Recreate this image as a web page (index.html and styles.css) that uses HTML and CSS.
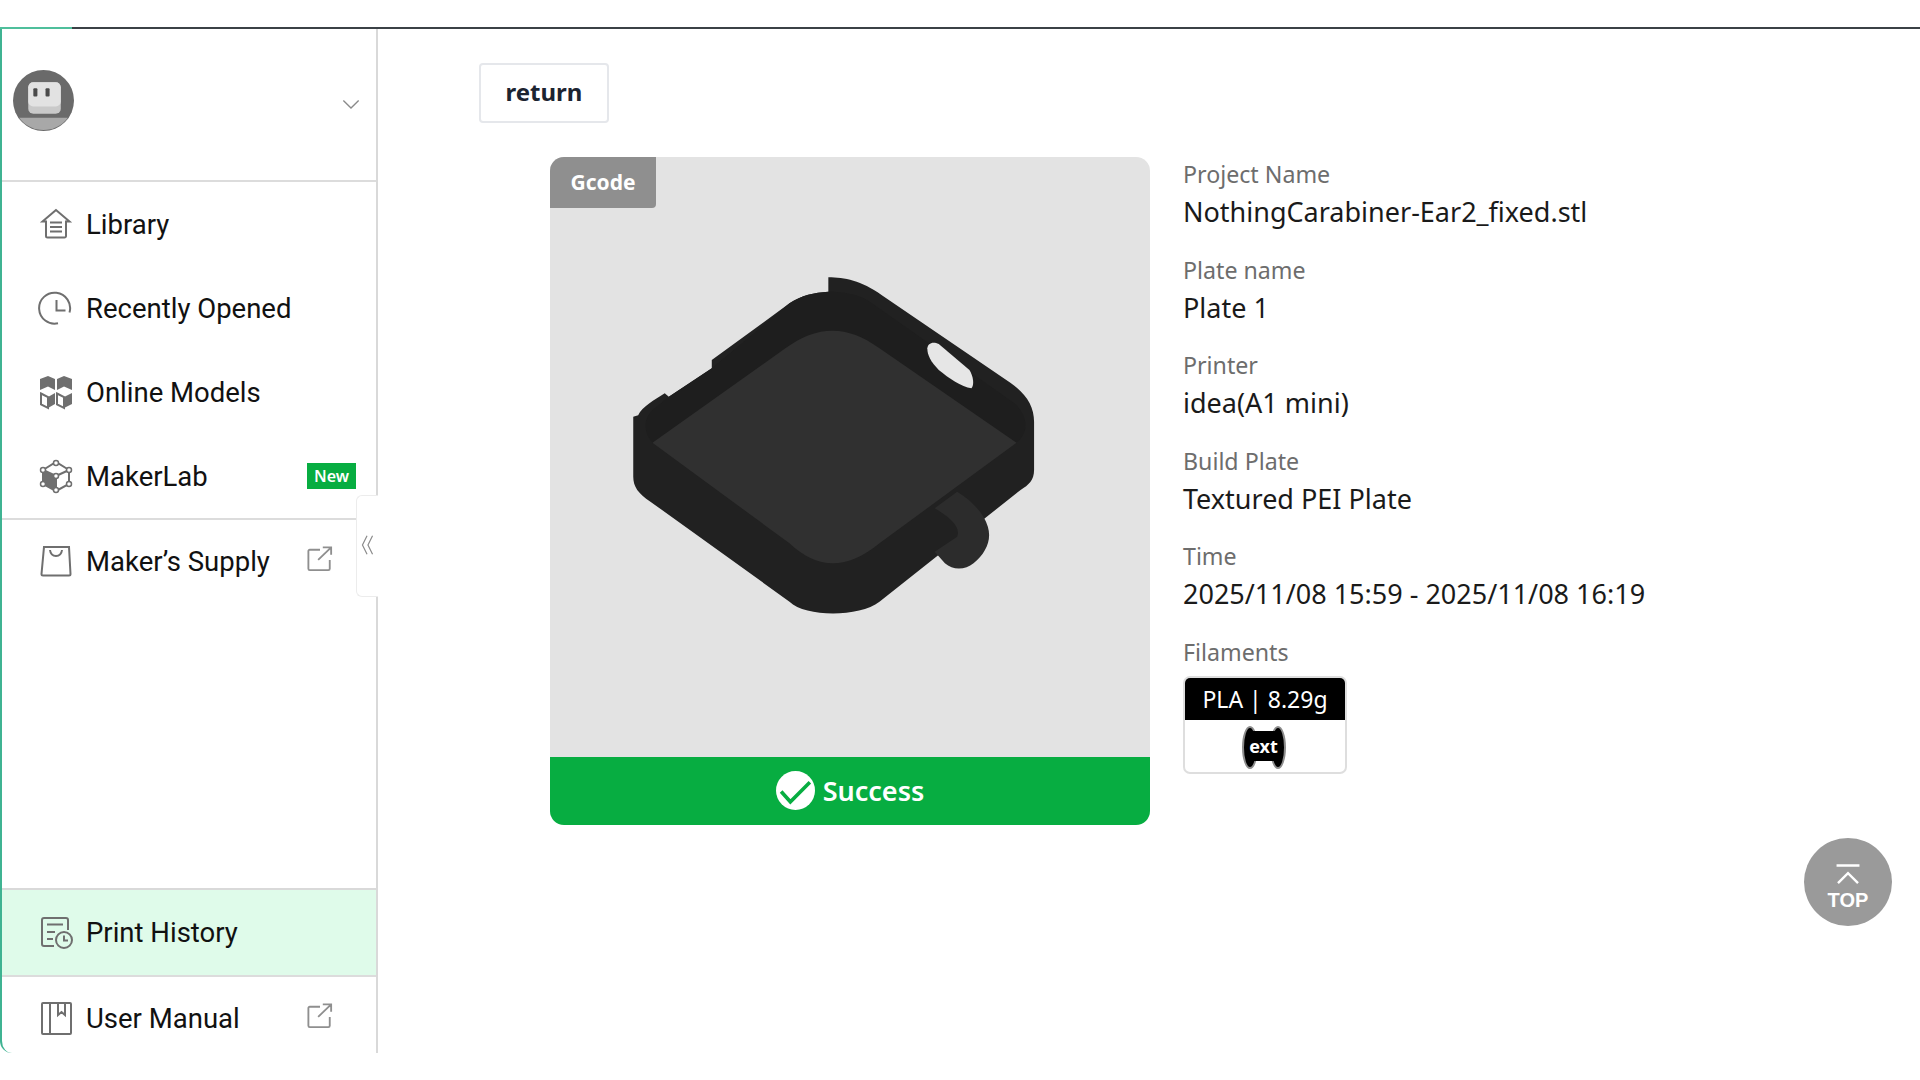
FILE: index.html
```html
<!DOCTYPE html>
<html lang="en">
<head>
    <meta charset="UTF-8">
    <title>Print History</title>
    <link rel="stylesheet" href="styles.css">
</head>
<body>
    <div class="top-strip"></div>
    <div class="app">
        <aside class="sidebar">
            <div class="user-box">
                <svg class="avatar" viewBox="0 0 60 60">
                    <circle cx="30" cy="30" r="30" fill="#6a6a6a"/>
                    <path d="M6 47h48a30 30 0 0 1-48 0z" fill="#a8a8a8"/>
                    <rect x="15" y="12" width="32" height="31" rx="5" fill="#c9c9c9"/>
                    <rect x="15" y="12" width="32" height="24" rx="5" fill="#e2e2e2"/>
                    <rect x="20" y="18" width="4" height="8" rx="1" fill="#4a4a4a"/>
                    <rect x="32" y="18" width="4" height="8" rx="1" fill="#4a4a4a"/>
                </svg>
                <svg class="chevron" viewBox="0 0 20 12"><path d="M1.5 1.5 10 10l8.5-8.5"/></svg>
            </div>

            <a class="nav-row">
                <svg class="nav-icon" viewBox="0 0 36 36"><path d="M18 4 4.5 15.5H8V30a1.500 1.500 0 0 0 1.500 1.500h17A1.500 1.500 0 0 0 28 30V15.500h3.500zM12 16.500h12M12 21h12M12 25.500h12"/></svg>
                <span>Library</span>
            </a>
            <a class="nav-row">
                <svg class="nav-icon" viewBox="0 0 36 36"><path d="M31.500 22.500A15.500 15.500 0 1 0 20 33.300M18.500 10v10.500h9"/></svg>
                <span>Recently Opened</span>
            </a>
            <a class="nav-row">
                <svg class="nav-icon" viewBox="0 0 36 36">
                    <path class="solid" d="M2 5l8-3 7 3v11l-7-3.500-8 3.500zM19 5l7-3 8 3v11l-8-3.500-7 3.500zM10 34V23l7-4v11zM26 34V23l8-4v11z"/>
                    <path d="M3 19.500l7 3.500v11l-7-3.500zM19 19.500l7 3.500v11l-7-3.500z"/>
                </svg>
                <span>Online Models</span>
            </a>
            <a class="nav-row">
                <svg class="nav-icon" viewBox="0 0 36 36">
                    <path class="solid" d="M5 12l13 6v15L5 26z"/>
                    <path d="M5 12 18 4l13 8v14l-13 7-13-7zM18 18l13-6M18 18v15M18 18 5 12"/>
                    <circle class="dot" cx="18" cy="5" r="2.500"/><circle class="dot" cx="31" cy="12" r="2.500"/><circle class="dot" cx="31" cy="26" r="2.500"/><circle class="dot" cx="18" cy="32" r="2.500"/><circle class="dot" cx="5" cy="26" r="2.500"/><circle class="dot" cx="5" cy="12" r="2.500"/><circle class="dot" cx="18" cy="18" r="2.500"/>
                </svg>
                <span>MakerLab</span>
                <em class="badge-new">New</em>
            </a>
            <a class="nav-row nav-row-split">
                <svg class="nav-icon" viewBox="0 0 36 36"><path d="M6 4h25l1.500 27a1.500 1.500 0 0 1-1.500 1.500H5A1.500 1.500 0 0 1 3.500 31zM12 7c1 8 11 8 12 0"/></svg>
                <span>Maker’s Supply</span>
                <svg class="ext-icon" viewBox="0 0 28 28"><path d="M14 4H3a1.500 1.500 0 0 0-1.500 1.500v19A1.500 1.500 0 0 0 3 26h20a1.500 1.500 0 0 0 1.500-1.500V15M12 15 26 1.500M17 1.500h9v8"/></svg>
            </a>

            <div class="sidebar-spacer"></div>

            <div class="sidebar-bottom">
                <a class="nav-row nav-row-active">
                    <svg class="nav-icon" viewBox="0 0 36 36"><path d="M16 31H6a2 2 0 0 1-2-2V5a2 2 0 0 1 2-2h22a2 2 0 0 1 2 2v10M9 9.500h16M9 17h8M9 24h6"/><circle cx="26" cy="25" r="8"/><path d="M26 20.500V25.500h4"/></svg>
                    <span>Print History</span>
                </a>
                <a class="nav-row nav-row-split">
                    <svg class="nav-icon" viewBox="0 0 36 36"><path d="M5 3h27a1 1 0 0 1 1 1v29a1 1 0 0 1-1 1H5a1 1 0 0 1-1-1V4a1 1 0 0 1 1-1zM12 3v31M20 3v12l3.500-3 3.500 3V3"/></svg>
                    <span>User Manual</span>
                    <svg class="ext-icon" viewBox="0 0 28 28"><path d="M14 4H3a1.500 1.500 0 0 0-1.500 1.500v19A1.500 1.500 0 0 0 3 26h20a1.500 1.500 0 0 0 1.500-1.500V15M12 15 26 1.500M17 1.500h9v8"/></svg>
                </a>
            </div>

            <div class="collapse-handle">
                <svg viewBox="0 0 14 24"><path d="M6.500 2 1.500 12l5 10M12.500 2l-5 10 5 10"/></svg>
            </div>
        </aside>

        <main class="content">
            <button class="return-btn">return</button>

            <section class="detail">
                <div class="task-card">
                    <div class="task-image">
                        <span class="tag-gcode">Gcode</span>
                        <!-- viewBox taken from a crop of the model, stretched on purpose -->
                        <svg class="model" viewBox="24.450 51 1467 1800" preserveAspectRatio="none">
                            <path fill="#212121" d="M705 412C745 412 785 422 835 465L1150 728C1190 762 1208 800 1208 845V990C1208 1020 1195 1035 1175 1050L830 1385C780 1432 650 1432 610 1385L270 1085C240 1060 228 1040 228 1010V830L240 826C250 800 280 780 305 760L315 770 420 685V660L610 490C640 465 670 458 705 455z"/>
                            <path fill="#1e1e1e" d="M705 455C670 458 640 465 610 490L420 685 315 770 275 810C255 835 250 870 275 908L1165 908C1195 880 1195 830 1160 790L800 480C775 462 740 455 705 455z"/>
                            <path fill="#303030" d="M600 625C680 555 750 555 830 625L1165 908 830 1210C750 1290 680 1290 610 1210L275 908z"/>
                            <path fill="#e6e6e6" d="M947 625C948 610 960 603 975 612L1050 690C1060 710 1062 735 1055 745 1030 740 1000 715 975 690 955 665 947 645 947 625z"/>
                            <path fill="#2c2c2c" d="M965 1105 1020 1055C1055 1080 1085 1120 1095 1160 1105 1200 1090 1240 1060 1270 1040 1290 1010 1292 990 1270L965 1235 1020 1190C1030 1160 1000 1130 965 1105z"/>
                        </svg>
                    </div>
                    <div class="task-status">
                        <svg class="status-icon" viewBox="0 0 38 38">
                            <circle cx="19" cy="19" r="19" fill="#fff"/>
                            <path d="M5 20l9 10L33 11" fill="none" stroke="#07ad41" stroke-width="3.500"/>
                        </svg>
                        <span>Success</span>
                    </div>
                </div>

                <div class="task-info">
                    <div class="info-item">
                        <label>Project Name</label>
                        <p>NothingCarabiner-Ear2_fixed.stl</p>
                    </div>
                    <div class="info-item">
                        <label>Plate name</label>
                        <p>Plate 1</p>
                    </div>
                    <div class="info-item">
                        <label>Printer</label>
                        <p>idea(A1 mini)</p>
                    </div>
                    <div class="info-item">
                        <label>Build Plate</label>
                        <p>Textured PEI Plate</p>
                    </div>
                    <div class="info-item">
                        <label>Time</label>
                        <p>2025/11/08 15:59 - 2025/11/08 16:19</p>
                    </div>
                    <div class="info-item">
                        <label>Filaments</label>
                        <div class="filament">
                            <div class="filament-head">PLA | 8.29g</div>
                            <div class="filament-body">
                                <span class="spool">ext</span>
                            </div>
                        </div>
                    </div>
                </div>
            </section>
        </main>

        <button class="top-btn">
            <svg viewBox="0 0 26 22"><path d="M1 1.500h24M2.500 20 13 9.500 23.500 20"/></svg>
            <span>TOP</span>
        </button>
    </div>
</body>
</html>
```

FILE: styles.css
```css
* {
    box-sizing: border-box;
}

html, body {
    height: 100%;
}

body {
    margin: 0;
    overflow: hidden;
    background-color: #fff;
    font-family: "Noto Sans", "Open Sans", Arial, sans-serif;
    color: #1a1a1a;
}

.top-strip {
    height: 27px;
}

.app {
    position: relative;
    display: flex;
    height: 1026px;
    border-top: 2px solid #3b4146;
}

.app::before {
    content: "";
    position: absolute;
    top: -2px;
    left: 0;
    width: 72px;
    height: 2px;
    background-color: #4fbf9c;
}

/* sidebar */
.sidebar {
    position: relative;
    display: flex;
    flex-direction: column;
    flex: none;
    width: 378px;
    border-left: 2px solid #3fb392;
    border-right: 2px solid #d9d9d9;
    border-bottom-left-radius: 12px;
    font-family: Roboto, "Noto Sans", Arial, sans-serif;
    font-size: 27.500px;
    color: #111;
}

.user-box {
    display: flex;
    align-items: center;
    justify-content: space-between;
    flex: none;
    height: 153px;
    padding: 0 16px 0 11px;
    border-bottom: 2px solid #dcdcdc;
}

.avatar {
    width: 61px;
    height: 61px;
    margin-top: -8px;
}

.chevron {
    width: 18px;
    height: 11px;
    fill: none;
    stroke: #8a8a8a;
    stroke-width: 1.500;
}

.nav-row {
    display: flex;
    align-items: center;
    flex: none;
    height: 84px;
    padding-left: 36px;
    padding-right: 20px;
}

.nav-row span {
    margin-left: 12px;
}

.nav-icon {
    flex: none;
    width: 36px;
    height: 36px;
    fill: none;
    stroke: #6f6f6f;
    stroke-width: 2;
}

.nav-icon .solid {
    fill: #6f6f6f;
    stroke: none;
}

.nav-icon .dot {
    fill: #fff;
    stroke-width: 1.500;
}

.badge-new {
    margin-left: auto;
    padding: 0 7px;
    height: 26px;
    line-height: 26px;
    background-color: #07ad41;
    color: #fff;
    font-family: "Noto Sans", Arial, sans-serif;
    font-size: 16px;
    font-style: normal;
    font-weight: 600;
}

.ext-icon {
    flex: none;
    width: 26px;
    height: 26px;
    margin-left: auto;
    margin-right: 23px;
    margin-top: -4px;
    fill: none;
    stroke: #8f8f8f;
    stroke-width: 2;
}

.nav-row-split {
    border-top: 2px solid #dcdcdc;
}

.sidebar-spacer {
    flex: 1;
}

.sidebar-bottom {
    flex: none;
    height: 165px;
    overflow: hidden;
    border-top: 2px solid #d9d9d9;
}

.nav-row-active {
    height: 85px;
    background-color: #dffbea;
}

.collapse-handle {
    position: absolute;
    top: 466px;
    right: -2px;
    display: flex;
    align-items: center;
    justify-content: center;
    width: 22px;
    height: 102px;
    background-color: #fff;
    border: 1px solid #ececec;
    border-right: none;
    border-radius: 6px 0 0 6px;
}

.collapse-handle svg {
    width: 13px;
    height: 22px;
    margin-top: -2px;
    fill: none;
    stroke: #8a8a8a;
    stroke-width: 1.300;
}

/* main area */
.content {
    flex: 1;
    padding: 34px 0 0 101px;
}

.return-btn {
    display: block;
    width: 130px;
    height: 60px;
    padding: 0 0 4px;
    background-color: #fff;
    border: 2px solid #e5e7eb;
    border-radius: 4px;
    font-family: "Noto Sans", Arial, sans-serif;
    font-size: 24px;
    font-weight: 700;
    color: #1c2431;
}

.detail {
    display: flex;
    gap: 33px;
    margin-top: 34px;
    margin-left: 71px;
}

.task-card {
    flex: none;
    width: 600px;
    height: 668px;
    border-radius: 14px;
    overflow: hidden;
}

.task-image {
    position: relative;
    height: 600px;
    background-color: #e3e3e3;
}

.model {
    display: block;
    width: 600px;
    height: 600px;
}

.tag-gcode {
    position: absolute;
    top: 0;
    left: 0;
    width: 106px;
    height: 51px;
    line-height: 50px;
    text-align: center;
    background-color: #8f8f8f;
    border-bottom-right-radius: 4px;
    color: #fff;
    font-size: 21px;
    font-weight: 700;
}

.task-status {
    display: flex;
    align-items: center;
    justify-content: center;
    gap: 8px;
    height: 68px;
    padding-bottom: 1px;
    background-color: #07ad41;
    color: #fff;
    font-size: 27px;
    font-weight: 600;
}

.status-icon {
    width: 39px;
    height: 39px;
}

.info-item {
    height: 95.500px;
}

.info-item label {
    display: block;
    height: 36px;
    padding-top: 1px;
    font-size: 23.200px;
    line-height: 33px;
    color: #6d6d6d;
}

.info-item p {
    margin: 0;
    font-size: 27px;
    line-height: 37px;
    color: #1a1a1a;
}

.filament {
    width: 164px;
    height: 98px;
    margin-top: 5px;
    border: 2px solid #dedede;
    border-radius: 7px;
    overflow: hidden;
}

.filament-head {
    height: 42px;
    line-height: 42px;
    background-color: #000;
    color: #fff;
    font-size: 23px;
    text-align: center;
}

.filament-body {
    display: flex;
    justify-content: center;
    align-items: center;
    height: 52px;
    padding-right: 3px;
}

.spool {
    position: relative;
    width: 32px;
    height: 30px;
    line-height: 31px;
    background-color: #000;
    color: #fff;
    font-size: 18px;
    font-weight: 700;
    text-align: center;
}

/* flanges sit behind the label */
.spool::before,
.spool::after {
    content: "";
    position: absolute;
    z-index: -1;
    top: -5px;
    width: 12px;
    height: 39px;
    background-color: #000;
    border: 2.500px solid #8d8d8d;
    border-radius: 50%;
}

.spool::before {
    left: -6px;
}

.spool::after {
    right: -6px;
}

.top-btn {
    position: absolute;
    top: 809px;
    right: 28px;
    display: flex;
    flex-direction: column;
    align-items: center;
    width: 88px;
    height: 88px;
    padding: 26px 0 0;
    background-color: #9a9a9a;
    border: none;
    border-radius: 50%;
    color: #fff;
    font-family: "Liberation Sans", Arial, sans-serif;
    font-size: 20px;
    font-weight: 700;
}

.top-btn svg {
    width: 26px;
    height: 21px;
    fill: none;
    stroke: #fff;
    stroke-width: 2.500;
}

.top-btn span {
    line-height: 20px;
    margin-top: 5px;
}
```
